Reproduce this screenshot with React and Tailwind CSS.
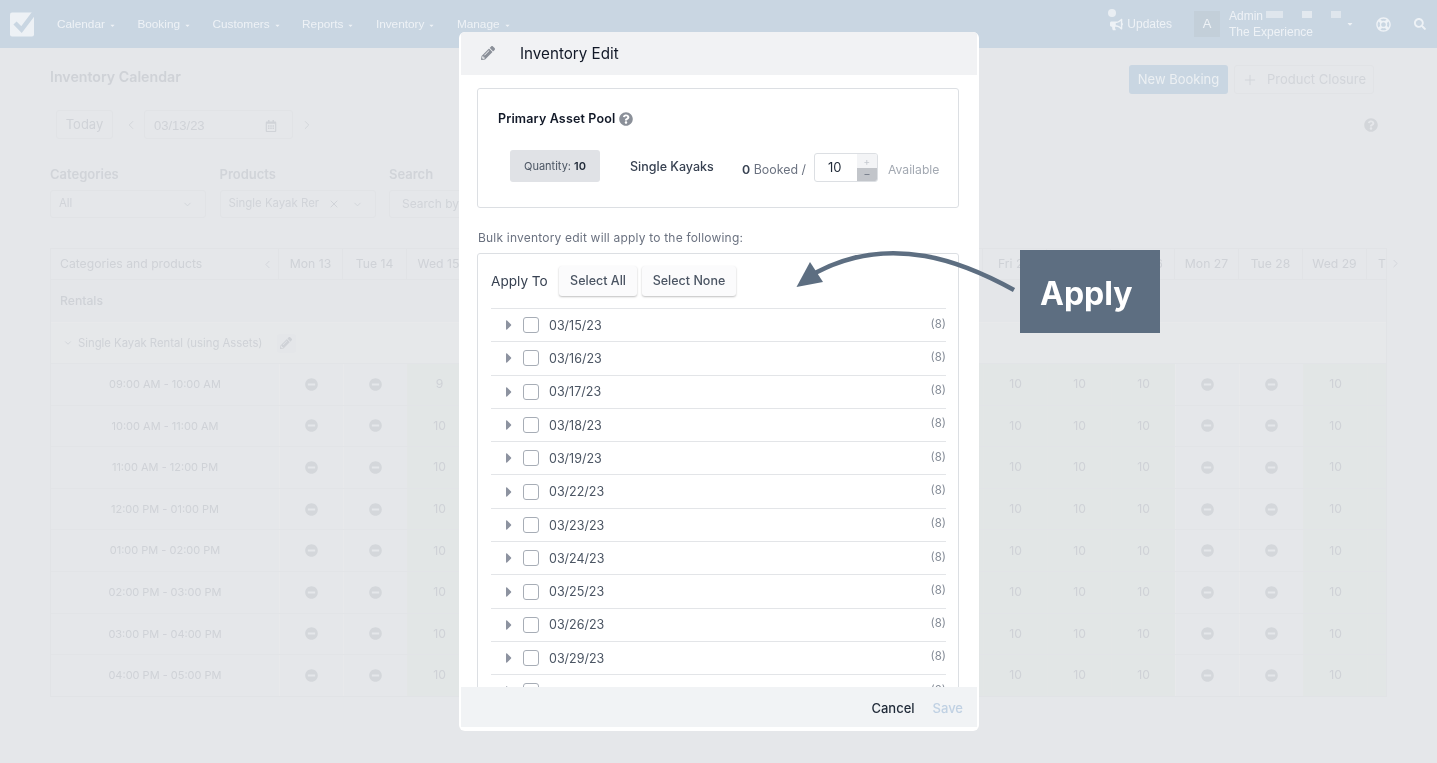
import { ChevronDown, ChevronLeft, ChevronRight, Plus, X } from "lucide-react";
import {
  FaBullhorn,
  FaCaretDown,
  FaCaretRight,
  FaMinusCircle,
  FaPencilAlt,
  FaQuestionCircle,
  FaRegCalendarAlt,
  FaRegLifeRing,
  FaSearch,
} from "react-icons/fa";

const navItems = ["Calendar", "Booking", "Customers", "Reports", "Inventory", "Manage"];
const days = ["Mon 13", "Tue 14", "Wed 15", "Thu 16", "Fri 17", "Sat 18", "Sun 19", "Mon 20", "Tue 21", "Wed 22", "Thu 23", "Fri 24", "Sat 25", "Sun 26", "Mon 27", "Tue 28", "Wed 29", "Thu 30"];
const closedDays = [0, 1, 14, 15];
const times = [
  "09:00 AM - 10:00 AM",
  "10:00 AM - 11:00 AM",
  "11:00 AM - 12:00 PM",
  "12:00 PM - 01:00 PM",
  "01:00 PM - 02:00 PM",
  "02:00 PM - 03:00 PM",
  "03:00 PM - 04:00 PM",
  "04:00 PM - 05:00 PM",
];
// the last row sits under the footer, only its checkbox top shows
const dates = ["03/15/23", "03/16/23", "03/17/23", "03/18/23", "03/19/23", "03/22/23", "03/23/23", "03/24/23", "03/25/23", "03/26/23", "03/29/23", ""];

function Logo() {
  return (
    <svg width="25" height="25" viewBox="0 0 25 25" className="shrink-0">
      <rect width="24" height="24" y="0.5" rx="2" fill="#edf1f5" />
      <path d="M5 11l6.5 6.5L24 1" fill="none" stroke="#c9d6e2" strokeWidth="4.5" />
    </svg>
  );
}

function TopNav() {
  return (
    <header className="relative h-12 bg-[#c9d6e2] flex items-center pl-[10px] text-[12px] text-[#eef2f6]">
      <Logo />
      <nav className="flex items-center gap-[21.5px] ml-[22px] mt-[2px] text-[11.8px] font-['Liberation_Sans',sans-serif]">
        {navItems.map((item) => (
          <span key={item} className="flex items-center gap-[4px]">
            {item}
            <FaCaretDown size={7} />
          </span>
        ))}
      </nav>
      <div className="ml-auto flex items-center font-['Liberation_Sans',sans-serif]">
        <span className="relative flex items-center gap-1">
          <span className="absolute -top-[6px] left-[-2px] size-2 rounded-full bg-[#e9eef3]" />
          <FaBullhorn size={13} />
          Updates
        </span>
        <span className="ml-[22px] size-[26px] bg-[#c3cfd9] flex items-center justify-center text-[13px]">A</span>
        <div className="relative ml-[9px] w-[116px] leading-[16px]">
          <div>Admin</div>
          <div>The Experience</div>
          <span className="absolute left-[37px] top-[3px] w-[17px] h-[7px] bg-[#dfe6ed]" />
          <span className="absolute left-[73px] top-[3px] w-[10px] h-[7px] bg-[#e3e9ef]" />
          <span className="absolute left-[102px] top-[3px] w-[10px] h-[7px] bg-[#dfe6ed]" />
        </div>
        <FaCaretDown size={8} className="ml-[1px]" />
        <FaRegLifeRing size={15} className="ml-[22px]" />
        <FaSearch size={12} className="ml-[23px] mr-[11px]" />
      </div>
    </header>
  );
}

function FilterSelect({ label, children, inset }) {
  return (
    <div className="w-[156px]">
      <div className="text-[13px] font-semibold text-[#d1d4d9] leading-4 mb-2">{label}</div>
      <div className={inset ? "h-7 border border-[#e1e3e6] rounded-[3px] flex items-center pl-3 text-[12px] text-[#d1d4d9]" : "h-7 border border-[#e1e3e6] rounded-[3px] flex items-center pl-2 pr-3 text-[11.4px] text-[#d1d4d9]"}>
        {children}
      </div>
    </div>
  );
}

function CalendarTable() {
  return (
    <div className="relative mt-[30px] mr-[50px] text-[12.2px] text-[#cfd2d7]">
      <ChevronRight size={13} strokeWidth={1.5} className="absolute right-[-15px] top-[9px]" />
      <div className="border border-[#e1e3e6] overflow-hidden">
        <div className="flex h-[31px] items-center border-b border-[#e1e3e6]">
          <div className="w-[228px] shrink-0 h-full flex items-center justify-between pl-[9px] pr-[4px] border-r border-[#e1e3e6]">
            Categories and products
            <ChevronLeft size={13} strokeWidth={1.5} />
          </div>
          <div className="flex-1 min-w-0 flex overflow-hidden h-full">
            {days.map((day) => (
              <div
                key={day}
                className={
                  day === "Thu 30"
                    ? "w-16 shrink-0 flex items-center pl-[11px]"
                    : "w-16 shrink-0 flex items-center justify-center border-r border-[#e1e3e6]"
                }
              >
                {day}
              </div>
            ))}
          </div>
        </div>
        <div className="h-[42px] pl-[9px] flex items-center bg-[#e4e6e9] font-medium">Rentals</div>
        <div className="h-[41px] pl-[12px] flex items-center gap-[5px] text-[11.3px] border-t border-[#e8e9eb] bg-[#e6e8ea]">
          <ChevronDown size={10} />
          Single Kayak Rental (using Assets)
          <span className="ml-[9px] size-[19px] rounded-[3px] bg-[#e4e6e9] flex items-center justify-center">
            <FaPencilAlt size={12} />
          </span>
        </div>
        {times.map((time, rowIndex) => (
          <div key={time} className="flex h-[41.6px] border-t border-[#e2e4e7]">
            <div className="w-[228px] shrink-0 flex items-center justify-center text-[11px]">{time}</div>
            <div className="flex-1 min-w-0 flex overflow-hidden">
              {days.map((day, colIndex) => (
                <div
                  key={day}
                  className={
                    closedDays.includes(colIndex)
                      ? "w-16 shrink-0 flex items-center justify-center border-l border-[#e8e9eb]"
                      : "w-16 shrink-0 flex items-center justify-center border-l border-[#e3e6e6] bg-[#e2e6e6]"
                  }
                >
                  {closedDays.includes(colIndex) ? (
                    <FaMinusCircle size={13} className="text-[#d4d7db]" />
                  ) : colIndex === 2 && rowIndex === 0 ? (
                    "9"
                  ) : (
                    "10"
                  )}
                </div>
              ))}
            </div>
          </div>
        ))}
      </div>
    </div>
  );
}

function Background() {
  return (
    <main className="pl-[50px] font-['Inter',sans-serif]">
      <div className="flex items-start justify-between pr-[63px] pt-[17px]">
        <h1 className="text-[14.2px] font-semibold text-[#cfd2d7] leading-[24px]">Inventory Calendar</h1>
        <div className="flex gap-[6px] text-[13px]">
          <button type="button" className="h-[29px] w-[99px] rounded-[3px] bg-[#c9d6e2] text-[#ecf0f3]">
            New Booking
          </button>
          <button type="button" className="h-[29px] w-[140px] rounded-[3px] border border-[#e1e3e6] text-[#d2d5da] flex items-center justify-center gap-[9px]">
            <Plus size={16} strokeWidth={1.5} />
            Product Closure
          </button>
        </div>
      </div>
      <div className="flex items-center mt-[16px] pl-[6px] pr-[59px] text-[#d0d3d8] text-[13px]">
        <span className="h-[29px] w-[57px] pt-px border border-[#e1e3e6] rounded-[3px] flex items-center justify-center">Today</span>
        <ChevronLeft size={14} strokeWidth={1.5} className="ml-[11px]" />
        <span className="ml-[6px] h-[29px] w-[149px] pt-[2px] border border-[#e1e3e6] rounded-[3px] flex items-center justify-between pl-[9px] pr-[15px] font-['Liberation_Sans',sans-serif]">
          03/13/23
          <FaRegCalendarAlt size={12} />
        </span>
        <ChevronRight size={14} strokeWidth={1.5} className="ml-[7px]" />
        <FaQuestionCircle size={14} className="ml-auto text-[#d3d6da]" />
      </div>
      <div className="flex gap-[13.5px] mt-[27px]">
        <FilterSelect label="Categories">
          All
          <ChevronDown size={11} className="ml-auto" />
        </FilterSelect>
        <FilterSelect label="Products">
          Single Kayak Rer
          <X size={12} className="ml-[9px]" />
          <ChevronDown size={11} className="ml-auto" />
        </FilterSelect>
        <FilterSelect label="Search" inset>
          Search by
        </FilterSelect>
      </div>
      <CalendarTable />
    </main>
  );
}

function InventoryStepper() {
  return (
    <div className="ml-[8px] mt-[2px] flex h-[29px] w-[64px] border border-[#dcdfe3] rounded-[3px] overflow-hidden">
      <span className="flex-1 flex items-center pl-[13px] pt-px text-[13px] text-[#1f2937]">10</span>
      <span className="w-[20px] flex flex-col text-[10px] leading-none">
        <span className="h-[14px] bg-[#f3f4f6] flex items-center justify-center text-[#c5c9cf]">+</span>
        <span className="flex-1 bg-[#c2c5ca] flex items-center justify-center text-[#6b7280]">–</span>
      </span>
    </div>
  );
}

function DateRow({ date }) {
  return (
    <div className="h-[33.3px] shrink-0 flex items-center border-b border-[#e3e5e8] pl-[10px] text-[12.5px] text-[#4b5563]">
      <FaCaretRight size={16} className="text-[#8d93a0] mr-[6px]" />
      <span className="size-4 rounded-[3px] border border-[#a7adb6] bg-white" />
      <span className="ml-[10px] mt-[2px]">{date}</span>
      <span className="ml-auto mb-[2px] text-[11.5px] text-[#858c97]">(8)</span>
    </div>
  );
}

function InventoryModal() {
  return (
    <div className="absolute left-[459px] top-[32px] w-[520px] h-[699px] bg-white rounded-[6px] flex flex-col overflow-hidden font-['Inter',sans-serif] px-[2px] pb-[4px]">
      <div className="h-[43px] shrink-0 bg-[#f1f2f4] flex items-center pl-[20px]">
        <FaPencilAlt size={14} className="text-[#8b9099] mt-[-1px]" />
        <span className="ml-[25px] mt-[2px] text-[15.2px] text-[#111827]">Inventory Edit</span>
      </div>
      <div className="flex-1 min-h-0 overflow-hidden pl-[16px] pr-[18px] pt-[13px]">
        <section className="h-[120px] border border-[#dcdfe3] rounded-[3px] pl-[20px] pt-[22px]">
          <h2 className="flex items-center gap-[4px] text-[12.5px] font-semibold text-[#111827] leading-4 tracking-[0.15px]">
            Primary Asset Pool
            <FaQuestionCircle size={14} className="text-[#8b9099]" />
          </h2>
          <div className="flex items-center mt-[23px] ml-[12px]">
            <span className="h-8 w-[90px] rounded-[3px] bg-[#e0e2e6] flex items-center justify-center text-[11px] text-[#4b5563]">
              Quantity:&nbsp;<b className="font-semibold text-[#1f2937]">10</b>
            </span>
            <span className="ml-[30px] mt-[2px] text-[12.5px] font-medium text-[#374151] w-[112px]">Single Kayaks</span>
            <span className="text-[12.4px] text-[#6b7280] mt-[8px]">
              <b className="font-semibold text-[#374151]">0</b> Booked /
            </span>
            <InventoryStepper />
            <span className="ml-[10px] mt-[8px] text-[12.2px] text-[#a3a9b2]">Available</span>
          </div>
        </section>
        <p className="mt-[22px] text-[12px] leading-4 text-[#6b7280] tracking-[0.2px] ml-[1px]">Bulk inventory edit will apply to the following:</p>
        <section className="mt-[7px] h-[480px] border border-[#dcdfe3] rounded-t-[3px] pl-[13px] pr-[12px] overflow-hidden">
          <div className="h-[55px] flex items-center border-b border-[#e3e5e8]">
            <span className="text-[13.6px] text-[#374151] w-[68px] mt-[1px]">Apply To</span>
            <button type="button" className="h-[30px] w-[78px] pt-px rounded-[3px] bg-[#fbfbfc] shadow-[0_1px_2px_rgba(0,0,0,0.25)] text-[12.5px] font-medium text-[#4b5563]">
              Select All
            </button>
            <button type="button" className="ml-[5px] h-[30px] w-[94px] pt-px rounded-[3px] bg-[#fbfbfc] shadow-[0_1px_2px_rgba(0,0,0,0.25)] text-[12.5px] font-medium text-[#4b5563]">
              Select None
            </button>
          </div>
          {dates.map((date, i) => (
            <DateRow key={i} date={date} />
          ))}
        </section>
      </div>
      <div className="h-10 shrink-0 pt-[3px] bg-[#f1f3f5] flex items-center justify-end gap-[18px] pr-[14px] text-[13px] font-medium">
        <button type="button" className="text-[#1f2937]">Cancel</button>
        <button type="button" className="text-[#c0d1e3]">Save</button>
      </div>
    </div>
  );
}

function ApplyCallout() {
  return (
    <>
      <svg width="240" height="70" viewBox="780 235 240 70" className="absolute left-[780px] top-[235px]">
        <path d="M1014 290C965 263 892 232 815 273" fill="none" stroke="#5d6e81" strokeWidth="4.5" />
        <path d="M810 262L796.5 287L823 282Z" fill="#5d6e81" />
      </svg>
      <div className="absolute left-[1020px] top-[250px] w-[140px] h-[83px] bg-[#5d6e81] flex items-center pl-[20px] pt-[4px] text-white text-[32px] font-bold font-['Inter',sans-serif]">
        Apply
      </div>
    </>
  );
}

export default function App() {
  return (
    <div className="relative w-[1437px] h-[763px] overflow-hidden bg-[#e5e7ea] blur-[0.4px]">
      <TopNav />
      <Background />
      <InventoryModal />
      <ApplyCallout />
    </div>
  );
}
